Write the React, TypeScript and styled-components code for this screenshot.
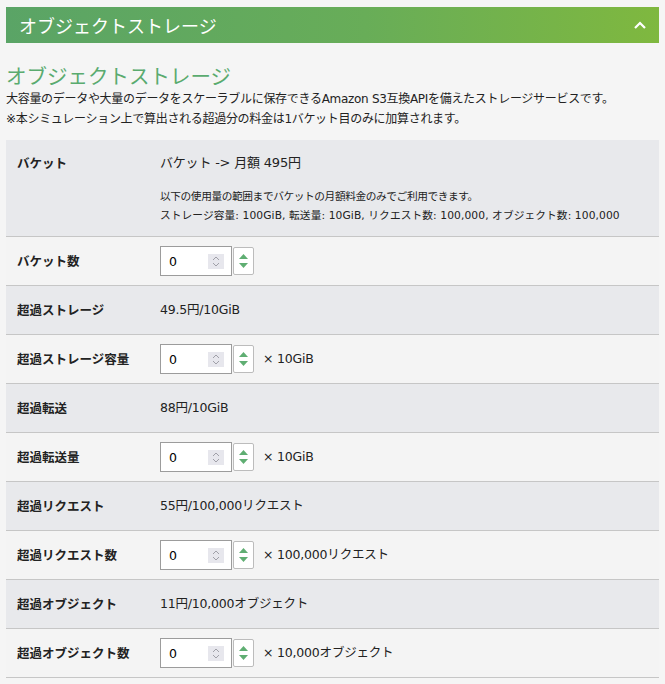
import React from "react";
import styled, { createGlobalStyle } from "styled-components";

const Global = createGlobalStyle`
  html, body { margin: 0; padding: 0; background: #f5f5f5; }
  body {
    font-family: "DejaVu Sans", "Noto Sans CJK JP", sans-serif;
    color: #222;
    -webkit-font-smoothing: antialiased;
  }
`;

const Page = styled.div`
  padding: 7px 6px 0 6px;
  width: 653px;
`;

const Header = styled.div`
  height: 36px;
  display: flex;
  align-items: center;
  justify-content: space-between;
  padding: 0 13px 0 13px;
  background: linear-gradient(90deg, #5aa466 0%, #68ad58 55%, #7fb83f 100%);
  color: #fff;
  font-family: "Noto Sans CJK JP", sans-serif;
  font-size: 18px;
  line-height: 24px;
`;

const Heading = styled.h2`
  margin: 20px 0 0 0;
  font-family: "Noto Sans CJK JP", sans-serif;
  font-size: 20.5px;
  line-height: 24px;
  font-weight: 400;
  color: #5aab6f;
`;

const Desc = styled.p`
  margin: 2px 0 0 0;
  font-size: 12px;
  line-height: 20px;
  letter-spacing: -0.3px;
`;

const Table = styled.div`
  margin-top: 11px;
  display: flex;
  flex-direction: column;
`;

const Row = styled.div<{ $alt?: boolean; $top?: boolean }>`
  display: grid;
  grid-template-columns: 154px 1fr;
  align-items: ${(p) => (p.$top ? "start" : "center")};
  min-height: 48px;
  background: ${(p) => (p.$alt ? "#e8e9ec" : "#f4f4f4")};
  border-bottom: 1px solid #c6c6c6;
  padding: ${(p) => (p.$top ? "14px 0 11px 0" : "0")};
`;

const Label = styled.div`
  padding-left: 11px;
  font-family: "Noto Sans CJK JP", sans-serif;
  font-size: 12.5px;
  line-height: 18px;
  font-weight: 700;
`;

const Value = styled.div`
  font-size: 12.5px;
  line-height: 18px;
  display: flex;
  align-items: center;
  letter-spacing: -0.2px;
`;

const ValueBlock = styled.div`
  display: flex;
  flex-direction: column;
`;

const Main = styled.div`
  font-size: 13px;
  line-height: 18px;
  letter-spacing: -0.2px;
`;

const Notes = styled.div`
  margin-top: 15px;
  display: flex;
  flex-direction: column;
`;

const Note = styled.div<{ $wide?: boolean }>`
  font-size: 10.7px;
  line-height: 19px;
  letter-spacing: ${(p) => (p.$wide ? "0.1px" : "-0.4px")};
  white-space: nowrap;
`;

const InputBox = styled.div`
  height: 28px;
  width: 55px;
  border: 1px solid #9c9c9c;
  background: #fff;
  display: flex;
  align-items: center;
  justify-content: space-between;
  padding: 0 7px 0 8px;
  box-sizing: content-box;
  margin-right: 1px;
`;

const InputText = styled.input`
  border: none;
  outline: none;
  width: 30px;
  padding: 0;
  font-family: inherit;
  font-size: 12.5px;
  color: #000;
  background: transparent;
`;

const InnerSpin = styled.div`
  width: 16px;
  height: 15px;
  background: #e7e7ed;
  display: flex;
  align-items: center;
  justify-content: center;
`;

const SpinBtn = styled.div`
  width: 19px;
  height: 26px;
  border: 1px solid #bcbcbc;
  border-radius: 2px;
  background: #fff;
  display: flex;
  flex-direction: column;
  align-items: center;
  justify-content: center;
  gap: 4px;
`;

const Suffix = styled.span`
  margin-left: 9px;
  font-size: 12.5px;
`;

const Spinner: React.FC = () => (
  <>
    <InputBox>
      <InputText defaultValue="0" readOnly />
      <InnerSpin>
        <svg width="8" height="11" viewBox="0 0 8 11" fill="none" stroke="#a0a0a8" strokeWidth="1">
          <path d="M1 4 L4 1 L7 4" />
          <path d="M1 7 L4 10 L7 7" />
        </svg>
      </InnerSpin>
    </InputBox>
    <SpinBtn>
      <svg width="9" height="5" viewBox="0 0 9 5">
        <path d="M0 5 L4.5 0 L9 5 Z" fill="#5fae72" />
      </svg>
      <svg width="9" height="5" viewBox="0 0 9 5">
        <path d="M0 0 L4.5 5 L9 0 Z" fill="#5fae72" />
      </svg>
    </SpinBtn>
  </>
);

const rows: { label: string; kind: "price" | "input"; text: string }[] = [
  { label: "超過ストレージ", kind: "price", text: "49.5円/10GiB" },
  { label: "超過ストレージ容量", kind: "input", text: "× 10GiB" },
  { label: "超過転送", kind: "price", text: "88円/10GiB" },
  { label: "超過転送量", kind: "input", text: "× 10GiB" },
  { label: "超過リクエスト", kind: "price", text: "55円/100,000リクエスト" },
  { label: "超過リクエスト数", kind: "input", text: "× 100,000リクエスト" },
  { label: "超過オブジェクト", kind: "price", text: "11円/10,000オブジェクト" },
  { label: "超過オブジェクト数", kind: "input", text: "× 10,000オブジェクト" },
];

export default function App() {
  return (
    <Page>
      <Global />
      <Header>
        <span>オブジェクトストレージ</span>
        <svg width="12" height="8" viewBox="0 0 12 8" fill="none" stroke="#fff" strokeWidth="2.2">
          <path d="M1 7 L6 2 L11 7" />
        </svg>
      </Header>
      <Heading>オブジェクトストレージ</Heading>
      <Desc>
        大容量のデータや大量のデータをスケーラブルに保存できるAmazon S3互換APIを備えたストレージサービスです。
        <br />
        ※本シミュレーション上で算出される超過分の料金は1バケット目のみに加算されます。
      </Desc>
      <Table>
        <Row $alt $top>
          <Label>バケット</Label>
          <ValueBlock>
            <Main>バケット -&gt; 月額 495円</Main>
            <Notes>
              <Note>以下の使用量の範囲までバケットの月額料金のみでご利用できます。</Note>
              <Note $wide>ストレージ容量: 100GiB, 転送量: 10GiB, リクエスト数: 100,000, オブジェクト数: 100,000</Note>
            </Notes>
          </ValueBlock>
        </Row>
        <Row>
          <Label>バケット数</Label>
          <Value>
            <Spinner />
          </Value>
        </Row>
        {rows.map((r) => (
          <Row key={r.label} $alt={r.kind === "price"}>
            <Label>{r.label}</Label>
            <Value>
              {r.kind === "input" ? (
                <>
                  <Spinner />
                  <Suffix>{r.text}</Suffix>
                </>
              ) : (
                r.text
              )}
            </Value>
          </Row>
        ))}
      </Table>
    </Page>
  );
}
